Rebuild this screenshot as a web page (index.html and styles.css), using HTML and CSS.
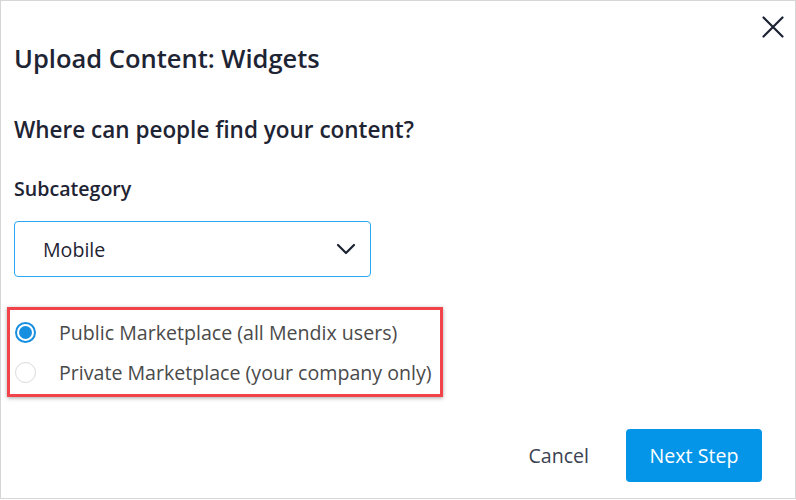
FILE: index.html
```html
<!DOCTYPE html>
<html>
<head>
<meta charset="utf-8">
<link rel="stylesheet" href="styles.css">
</head>
<body>
<div class="dialog">
  <button class="close" aria-label="Close">
    <svg width="22" height="22" viewBox="0 0 22 22"><path d="M1.5 1.5 L20.5 20.5 M20.5 1.5 L1.5 20.5" stroke="#1b2232" stroke-width="2.2" stroke-linecap="round" fill="none"/></svg>
  </button>
  <h1 class="title">Upload Content: Widgets</h1>
  <h2 class="question">Where can people find your content?</h2>
  <div class="label">Subcategory</div>
  <div class="select">
    <span class="select-value">Mobile</span>
    <svg class="chevron" width="20" height="12" viewBox="0 0 20 12"><path d="M2 2 L10 10 L18 2" stroke="#1b2232" stroke-width="2.2" stroke-linecap="round" stroke-linejoin="round" fill="none"/></svg>
  </div>
  <div class="radios">
    <label class="radio"><span class="dot checked"></span><span class="radio-text">Public Marketplace (all Mendix users)</span></label>
    <label class="radio"><span class="dot"></span><span class="radio-text">Private Marketplace (your company only)</span></label>
  </div>
  <div class="footer">
    <button class="cancel">Cancel</button>
    <button class="next">Next Step</button>
  </div>
</div>
</body>
</html>
```
FILE: styles.css
```css
* { box-sizing: border-box; }
html, body { margin: 0; padding: 0; background: #ffffff; }
body { font-family: "Open Sans", "Noto Sans", sans-serif; color: #1e2433; }
.dialog {
  position: relative;
  width: 796px;
  height: 499px;
  border: 1px solid #d6d6d6;
  padding: 0 0 0 13px;
  display: flex;
  flex-direction: column;
}
.close {
  position: absolute;
  top: 15px;
  right: 11px;
  border: 0;
  background: none;
  padding: 0;
  width: 22px;
  height: 22px;
}
.close svg { display: block; }
.title {
  margin: 40px 0 0 0;
  font-size: 25.5px;
  line-height: 34px;
  font-weight: 600;
}
.question {
  margin: 40px 0 0 0;
  font-size: 22.5px;
  line-height: 30px;
  font-weight: 600;
}
.label {
  margin-top: 31px;
  font-size: 19.6px;
  line-height: 26px;
  font-weight: 600;
}
.select {
  margin-top: 19px;
  width: 357px;
  height: 56px;
  border: 1px solid #2aa6f3;
  border-radius: 4px;
  display: flex;
  align-items: center;
  justify-content: space-between;
  padding: 0 14px 0 28px;
}
.select-value { font-size: 19.6px; color: #1e2433; }
.chevron { display: block; }
.radios {
  margin: 30px 0 0 -7px;
  width: 436px;
  border: 3px solid #f2424a;
  box-shadow: 0 1px 4px rgba(0,0,0,0.35);
  padding: 9px 0 9px 5px;
  display: flex;
  flex-direction: column;
  gap: 14px;
}
.radio {
  display: flex;
  align-items: center;
  height: 26px;
}
.dot {
  width: 21px;
  height: 21px;
  border-radius: 50%;
  border: 1px solid #d9d9d9;
  margin-right: 23px;
  flex: none;
  position: relative;
}
.dot.checked { border: 2px solid #168fe0; }
.dot.checked::after {
  content: "";
  position: absolute;
  left: 2px; top: 2px;
  width: 13px; height: 13px;
  border-radius: 50%;
  background: #168fe0;
}
.radio-text { font-size: 19.6px; color: #4a4a4a; }
.footer {
  margin-top: 32px;
  display: flex;
  justify-content: flex-end;
  align-items: center;
  padding-right: 33px;
  gap: 37px;
}
.cancel {
  border: 0;
  background: none;
  font-family: inherit;
  font-size: 19.6px;
  color: #3b4251;
  padding: 0;
}
.next {
  border: 0;
  background: #0595e8;
  color: #ffffff;
  font-family: inherit;
  font-size: 19.6px;
  width: 136px;
  height: 53px;
  border-radius: 4px;
  padding: 0;
}
```
